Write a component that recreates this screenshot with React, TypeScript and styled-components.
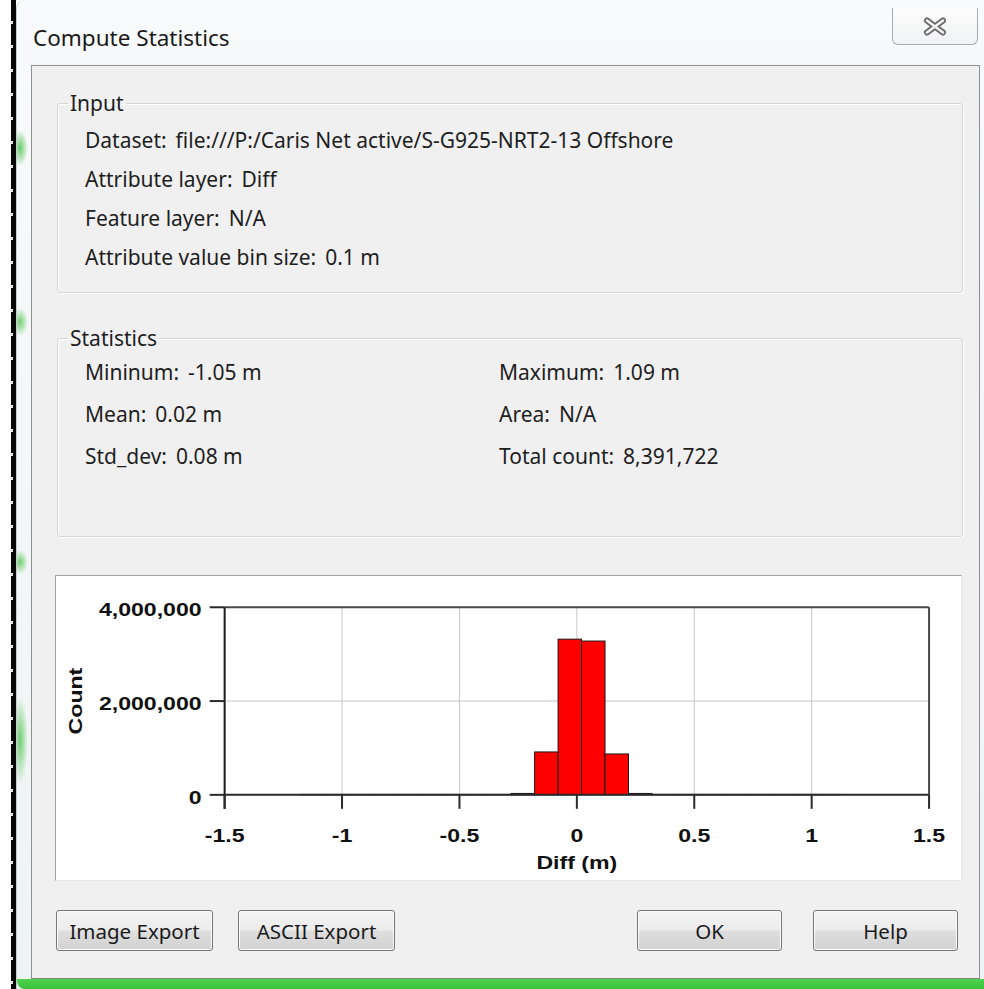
import React from "react";
import styled, { createGlobalStyle } from "styled-components";

const GlobalStyle = createGlobalStyle`
  html, body {
    margin: 0;
    padding: 0;
    background: #ffffff;
  }
  body {
    width: 984px;
    height: 989px;
    overflow: hidden;
    font-family: "Noto Sans", "Open Sans", sans-serif;
    color: #1e1e1e;
  }
`;

const Screen = styled.div`
  display: flex;
  width: 984px;
  height: 989px;
`;

/* the strip of desktop visible to the left of the dialog */
const DesktopEdge = styled.div`
  flex: none;
  width: 16px;
  display: flex;
  justify-content: flex-end;
  background: #ffffff;
`;

const DashedRule = styled.div`
  width: 5px;
  height: 100%;
  background:
    linear-gradient(to right, transparent 0 2px, #080808 2px),
    repeating-linear-gradient(to bottom, #080808 0 21px, #e4e4e4 21px 24px);
`;

const Window = styled.div`
  flex: 1;
  display: flex;
  flex-direction: column;
  border-top-left-radius: 9px;
  border-left: 1px solid #c4cccc;
  background:
    radial-gradient(8px 18px at 3px 148px, rgba(60, 190, 60, 0.75), transparent),
    radial-gradient(8px 14px at 3px 322px, rgba(60, 190, 60, 0.7), transparent),
    radial-gradient(8px 12px at 3px 562px, rgba(60, 190, 60, 0.7), transparent),
    radial-gradient(8px 44px at 3px 740px, rgba(60, 190, 60, 0.7), transparent),
    linear-gradient(#f8fafb, #eef3f3);
`;

const TitleBar = styled.div`
  flex: none;
  height: 65px;
  display: flex;
  justify-content: space-between;
  align-items: flex-start;
  padding-left: 16px;
`;

const Title = styled.div`
  margin-top: 24px;
  font-size: 22.5px;
  line-height: 28px;
  color: #1a1a1a;
`;

const CloseButton = styled.div`
  margin-top: 8px;
  margin-right: 6px;
  width: 84px;
  height: 36px;
  display: flex;
  align-items: center;
  justify-content: center;
  border: 1px solid #a5abb0;
  border-top: none;
  border-radius: 0 0 6px 6px;
  background: linear-gradient(#fdfdfd, #f1f2f3);
`;

const Client = styled.div`
  flex: 1;
  display: flex;
  flex-direction: column;
  margin: 0 4px 0 14px;
  padding: 25px 16px 0 25px;
  border: 1px solid #8d8f90;
  border-bottom: 1px solid #7b8a7b;
  background: #f0f0f0;
`;

const BottomFrame = styled.div`
  flex: none;
  height: 10px;
  border-bottom-left-radius: 8px;
  background: linear-gradient(#4fd14f, #38c23a);
`;

const Group = styled.fieldset<{ $gap?: number }>`
  margin: ${(p) => p.$gap ?? 0}px 0 0 0;
  padding: 0;
  min-width: 0;
  border: 1px solid #d6d6d6;
  border-radius: 3px;
  box-shadow: inset 1px 1px 0 #ffffff, 1px 1px 0 #ffffff;
`;

const Legend = styled.legend`
  margin-left: 10px;
  padding: 0 2px;
  font-size: 21px;
  line-height: 24px;
  color: #1e1e1e;
`;

const InputRows = styled.div`
  display: flex;
  flex-direction: column;
  padding: 5px 16px 16px 27px;
`;

const StatGrid = styled.div`
  display: grid;
  grid-template-columns: 414px 1fr;
  grid-auto-rows: 42px;
  align-items: center;
  padding: 1px 16px 59px 27px;
`;

const Row = styled.div`
  height: 39px;
  display: flex;
  align-items: center;
  white-space: nowrap;
  font-size: 21px;
`;

const Cell = styled.div`
  white-space: nowrap;
  font-size: 21px;
`;

const Value = styled.span`
  margin-left: 9px;
`;

const ChartFrame = styled.div`
  margin: 38px 1px 0 -2px;
  height: 304px;
  border: 1px solid;
  border-color: #a3a3a3 #e6e6e6 #e6e6e6 #a3a3a3;
  background: #ffffff;
`;

const ButtonRow = styled.div`
  display: flex;
  justify-content: space-between;
  margin: 29px 5px 0 -1px;
`;

const ButtonGroup = styled.div<{ $gap: number }>`
  display: flex;
  gap: ${(p) => p.$gap}px;
`;

const Button = styled.button<{ $w: number }>`
  width: ${(p) => p.$w}px;
  height: 41px;
  padding: 0;
  border: 1px solid #767676;
  border-radius: 3px;
  box-shadow: inset 0 0 0 1px #fbfbfb;
  background: linear-gradient(#f3f3f3 0%, #ececec 48%, #dedede 52%, #d2d2d2 100%);
  font-family: "Noto Sans", "Open Sans", sans-serif;
  font-size: 20.5px;
  color: #1a1a1a;
`;

/* histogram geometry, in chart pixels */
const LEFT = 169;
const RIGHT = 875;
const TOP = 31;
const BASE = 219;
const xOf = (v: number) => LEFT + ((v + 1.5) * (RIGHT - LEFT)) / 3;
const yOf = (c: number) => BASE - (c / 4_000_000) * (BASE - TOP);

const BIN_START = -1.18;
const BIN = 0.1;
const counts = [
  9000, 9000, 9000, 9000, 9000, 9000, 9000, 9000, 9000, 30000,
  915000, 3320000, 3280000, 872000, 30000,
  9000, 9000, 9000, 9000, 9000, 9000, 9000, 9000,
];

const xTicks = [-1.5, -1, -0.5, 0, 0.5, 1, 1.5];
const yTicks = [0, 2_000_000, 4_000_000];

const AxisText: React.FC<{ x: number; y: number; anchor: "start" | "middle" | "end"; rotate?: boolean; children: React.ReactNode }> = ({ x, y, anchor, rotate, children }) => (
  <text
    transform={`translate(${x} ${y})${rotate ? " rotate(-90)" : ""} scale(1.22 1)`}
    textAnchor={anchor}
    dominantBaseline="central"
    fontFamily='"Liberation Sans", Arial, sans-serif'
    fontWeight="bold"
    fontSize="19"
    fill="#111111"
  >
    {children}
  </text>
);

const Histogram: React.FC = () => (
  <svg width="100%" height="304" viewBox="0 0 907 304">
    {/* grid */}
    {xTicks.slice(1, -1).map((t) => (
      <line key={`gx${t}`} x1={xOf(t)} x2={xOf(t)} y1={TOP} y2={BASE} stroke="#c6c6c6" strokeWidth="1" />
    ))}
    <line x1={LEFT} x2={RIGHT} y1={yOf(2_000_000)} y2={yOf(2_000_000)} stroke="#c6c6c6" strokeWidth="1" />

    {/* bars */}
    {counts.map((c, i) => {
      const x0 = xOf(BIN_START + i * BIN);
      const x1 = xOf(BIN_START + (i + 1) * BIN);
      const y = yOf(c);
      return (
        <rect key={i} x={x0} y={y} width={x1 - x0} height={BASE - y} fill="#ff0000" stroke="#1a1a1a" strokeWidth="1" />
      );
    })}

    {/* plot frame */}
    <line x1={LEFT} x2={RIGHT} y1={TOP} y2={TOP} stroke="#4a4a4a" strokeWidth="2" />
    <line x1={RIGHT} x2={RIGHT} y1={TOP} y2={BASE} stroke="#4a4a4a" strokeWidth="2" />
    <line x1={LEFT} x2={RIGHT} y1={BASE} y2={BASE} stroke="#2a2a2a" strokeWidth="2" />
    <line x1={LEFT} x2={LEFT} y1={TOP} y2={BASE + 14} stroke="#1a1a1a" strokeWidth="2" />

    {/* ticks and labels */}
    {xTicks.map((t) => (
      <g key={`tx${t}`}>
        <line x1={xOf(t)} x2={xOf(t)} y1={BASE} y2={BASE + 14} stroke="#2a2a2a" strokeWidth="2" />
        <AxisText x={xOf(t)} y={260} anchor="middle">
          {String(t)}
        </AxisText>
      </g>
    ))}
    {yTicks.map((t) => (
      <g key={`ty${t}`}>
        <line x1={LEFT - 15} x2={LEFT} y1={yOf(t)} y2={yOf(t)} stroke="#2a2a2a" strokeWidth="2" />
        <AxisText x={146} y={yOf(t) + 2} anchor="end">
          {t.toLocaleString("en-US")}
        </AxisText>
      </g>
    ))}
    <AxisText x={xOf(0)} y={287} anchor="middle">
      Diff (m)
    </AxisText>
    <AxisText x={19} y={125} anchor="middle" rotate>
      Count
    </AxisText>
  </svg>
);

const CloseGlyph: React.FC = () => (
  <svg width="24" height="19" viewBox="0 0 24 19">
    <path d="M4 3.5 L20 15.5 M20 3.5 L4 15.5" stroke="#6b6b6b" strokeWidth="6" strokeLinecap="round" fill="none" />
    <path d="M4 3.5 L20 15.5 M20 3.5 L4 15.5" stroke="#f2f2f2" strokeWidth="2.6" strokeLinecap="round" fill="none" />
  </svg>
);

const inputRows: [string, string][] = [
  ["Dataset:", "file:///P:/Caris Net active/S-G925-NRT2-13 Offshore"],
  ["Attribute layer:", "Diff"],
  ["Feature layer:", "N/A"],
  ["Attribute value bin size:", "0.1 m"],
];

const statCells: [string, string][] = [
  ["Mininum:", "-1.05 m"],
  ["Maximum:", "1.09 m"],
  ["Mean:", "0.02 m"],
  ["Area:", "N/A"],
  ["Std_dev:", "0.08 m"],
  ["Total count:", "8,391,722"],
];

export default function App() {
  return (
    <>
      <GlobalStyle />
      <Screen>
        <DesktopEdge>
          <DashedRule />
        </DesktopEdge>
        <Window>
          <TitleBar>
            <Title>Compute Statistics</Title>
            <CloseButton>
              <CloseGlyph />
            </CloseButton>
          </TitleBar>
          <Client>
            <Group>
              <Legend>Input</Legend>
              <InputRows>
                {inputRows.map(([k, v]) => (
                  <Row key={k}>
                    {k}
                    <Value>{v}</Value>
                  </Row>
                ))}
              </InputRows>
            </Group>
            <Group $gap={33}>
              <Legend>Statistics</Legend>
              <StatGrid>
                {statCells.map(([k, v]) => (
                  <Cell key={k}>
                    {k}
                    <Value>{v}</Value>
                  </Cell>
                ))}
              </StatGrid>
            </Group>
            <ChartFrame>
              <Histogram />
            </ChartFrame>
            <ButtonRow>
              <ButtonGroup $gap={25}>
                <Button $w={157}>Image Export</Button>
                <Button $w={157}>ASCII Export</Button>
              </ButtonGroup>
              <ButtonGroup $gap={31}>
                <Button $w={145}>OK</Button>
                <Button $w={145}>Help</Button>
              </ButtonGroup>
            </ButtonRow>
          </Client>
          <BottomFrame />
        </Window>
      </Screen>
    </>
  );
}
